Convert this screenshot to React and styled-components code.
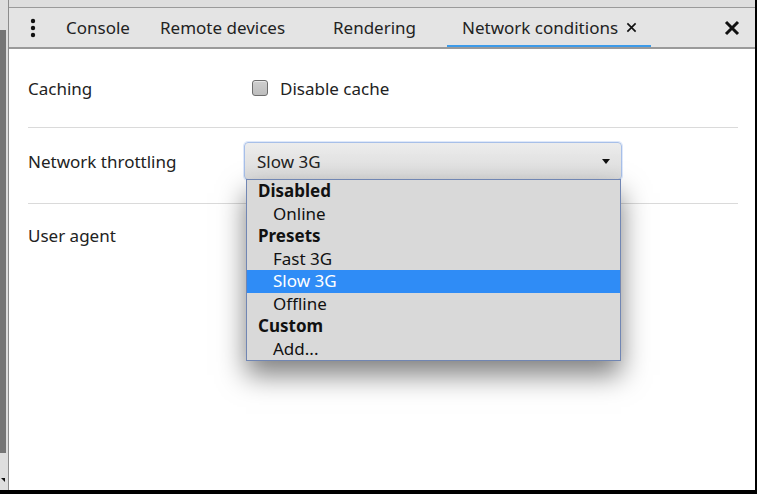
import React from "react";
import styled, { createGlobalStyle } from "styled-components";

const Global = createGlobalStyle`
  html, body { margin: 0; padding: 0; background: #000; overflow: hidden; }
  body { width: 757px; height: 494px; font-family: "Noto Sans", "Open Sans", sans-serif; }
`;

const Screen = styled.div`
  width: 757px;
  height: 494px;
  background: #000;
`;

const Window = styled.div`
  width: 755px;
  height: 490px;
  display: flex;
  background: #fff;
`;

const Gutter = styled.div`
  width: 8px;
  border-right: 1px solid #8c8c8c;
  background: #dedede;
  display: flex;
  flex-direction: column;
  position: relative;
`;

const GutterTop = styled.div`
  height: 30px;
`;

const Thumb = styled.div`
  width: 6px;
  height: 423px;
  background: #767676;
`;

const DownArrow = styled.div`
  position: absolute;
  left: 1px;
  bottom: 8px;
  width: 0;
  height: 0;
  border-top: 4px solid #111;
  border-left: 4px solid transparent;
`;

const Main = styled.div`
  flex: 1;
  display: flex;
  flex-direction: column;
  min-width: 0;
`;

const TopStrip = styled.div`
  height: 7px;
  background: #dedede;
  border-bottom: 1px solid #9a9a9a;
`;

const TabBar = styled.div`
  height: 39px;
  background: #e4e4e4;
  border-bottom: 2px solid #9a9a9a;
  display: flex;
  align-items: stretch;
  position: relative;
`;

const MenuButton = styled.div`
  width: 36px;
  padding-left: 6px;
  display: flex;
  align-items: center;
  justify-content: center;
`;

const Tab = styled.div`
  width: ${(p) => p.$w}px;
  box-sizing: border-box;
  padding-left: 15px;
  display: flex;
  align-items: center;
  gap: 8px;
  font-size: 17px;
  color: #222;
  white-space: nowrap;
  position: relative;
  ${(p) =>
    p.$active &&
    `
    &::after {
      content: "";
      position: absolute;
      left: 0;
      right: 0;
      bottom: 0;
      height: 2px;
      background: #3d9be9;
    }
  `}
`;

const Spacer = styled.div`
  flex: 1;
`;

const CloseButton = styled.div`
  display: flex;
  align-items: center;
  padding-right: 15px;
`;

const Content = styled.div`
  flex: 1;
  padding: 0 17px 0 19px;
  display: flex;
  flex-direction: column;
`;

const Section = styled.div`
  padding: ${(p) => p.$pad};
  border-bottom: ${(p) => (p.$last ? "none" : "1px solid #dadada")};
  display: flex;
  align-items: center;
  height: 38px;
  position: relative;
`;

const Label = styled.div`
  width: 216px;
  font-size: 17px;
  color: #222;
  flex-shrink: 0;
`;

const CheckRow = styled.label`
  display: flex;
  align-items: center;
  gap: 12px;
  margin-left: 8px;
  font-size: 17px;
  color: #222;
`;

const Checkbox = styled.span`
  width: 14px;
  height: 14px;
  border: 1px solid #6e6e6e;
  border-radius: 3px;
  background: linear-gradient(#cfcfcf, #bdbdbd);
  box-shadow: inset 0 1px 0 rgba(255, 255, 255, 0.5);
`;

const SelectWrap = styled.div`
  position: relative;
  width: 378px;
  height: 38px;
`;

const SelectBox = styled.div`
  box-sizing: border-box;
  width: 100%;
  height: 100%;
  border: 1px solid #a7bfe8;
  border-radius: 4px;
  background: linear-gradient(#ececec, #dcdcdc);
  box-shadow: 0 0 0 1px rgba(160, 190, 240, 0.35);
  padding: 0 11px 0 12px;
  display: flex;
  align-items: center;
  justify-content: space-between;
  font-size: 17px;
  color: #222;
`;

const Caret = styled.span`
  width: 0;
  height: 0;
  border-left: 4px solid transparent;
  border-right: 4px solid transparent;
  border-top: 5px solid #111;
`;

const Dropdown = styled.ul`
  position: absolute;
  top: 37px;
  left: 2px;
  width: 375px;
  box-sizing: border-box;
  margin: 0;
  padding: 0;
  list-style: none;
  background: #d9d9d9;
  border: 1px solid #7186b3;
  box-shadow: 0 14px 26px rgba(0, 0, 0, 0.5);
  z-index: 5;
`;

const Item = styled.li`
  height: 22.5px;
  line-height: 22.5px;
  padding-left: ${(p) => (p.$group ? 11 : 26)}px;
  font-size: 17px;
  font-weight: ${(p) => (p.$group ? 700 : 400)};
  color: ${(p) => (p.$selected ? "#fff" : "#111")};
  background: ${(p) => (p.$selected ? "#2f8cf6" : "transparent")};
`;

const Dots = () => (
  <svg width="6" height="20" viewBox="0 0 6 20">
    <circle cx="3" cy="3" r="2.2" fill="#111" />
    <circle cx="3" cy="10" r="2.2" fill="#111" />
    <circle cx="3" cy="17" r="2.2" fill="#111" />
  </svg>
);

const XIcon = ({ size, w }) => (
  <svg width={size} height={size} viewBox="0 0 16 16">
    <path d="M2 2 L14 14 M14 2 L2 14" stroke="#111" strokeWidth={w} strokeLinecap="butt" />
  </svg>
);

const items = [
  { t: "Disabled", g: true },
  { t: "Online" },
  { t: "Presets", g: true },
  { t: "Fast 3G" },
  { t: "Slow 3G", s: true },
  { t: "Offline" },
  { t: "Custom", g: true },
  { t: "Add..." },
];

export default function App() {
  return (
    <Screen>
      <Global />
      <Window>
        <Gutter>
          <GutterTop />
          <Thumb />
          <DownArrow />
        </Gutter>
        <Main>
          <TopStrip />
          <TabBar>
            <MenuButton>
              <Dots />
            </MenuButton>
            <Tab $w={94}>Console</Tab>
            <Tab $w={173}>Remote devices</Tab>
            <Tab $w={129}>Rendering</Tab>
            <Tab $w={204} $active>
              Network conditions
              <XIcon size={11} w={2.4} />
            </Tab>
            <Spacer />
            <CloseButton>
              <XIcon size={16} w={3} />
            </CloseButton>
          </TabBar>
          <Content>
            <Section $pad="20px 0 20px">
              <Label>Caching</Label>
              <CheckRow>
                <Checkbox />
                Disable cache
              </CheckRow>
            </Section>
            <Section $pad="14px 0 23px">
              <Label>Network throttling</Label>
              <SelectWrap>
                <SelectBox>
                  <span>Slow 3G</span>
                  <Caret />
                </SelectBox>
                <Dropdown>
                  {items.map((it) => (
                    <Item key={it.t} $group={it.g} $selected={it.s}>
                      {it.t}
                    </Item>
                  ))}
                </Dropdown>
              </SelectWrap>
            </Section>
            <Section $pad="12px 0 0" $last>
              <Label>User agent</Label>
            </Section>
          </Content>
        </Main>
      </Window>
    </Screen>
  );
}
